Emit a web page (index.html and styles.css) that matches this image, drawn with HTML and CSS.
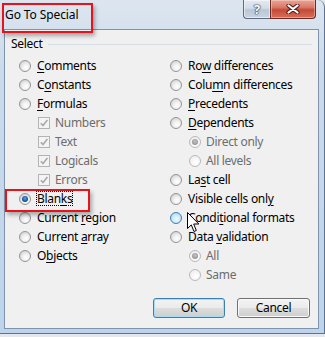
FILE: index.html
```html
<!DOCTYPE html>
<html lang="en">
<head>
  <meta charset="UTF-8">
  <meta name="viewport" content="width=device-width, initial-scale=1.0">
  <title>Go To Special</title>
  <link rel="stylesheet" href="styles.css">
</head>
<body>

  <div class="window">
    <!-- Title bar -->
    <div class="titlebar">
      <span class="title">Go To Special</span>
      <div class="caption-btn help">?</div>
      <div class="caption-btn close">
        <svg width="14" height="10" viewBox="0 0 14 10">
          <path d="M2.5 1.5 L11.5 8.5 M11.5 1.5 L2.5 8.5" stroke="#5a2018" stroke-width="4.2" stroke-linecap="round" fill="none"/>
          <path d="M2.5 1.5 L11.5 8.5 M11.5 1.5 L2.5 8.5" stroke="#ffffff" stroke-width="2.2" stroke-linecap="round" fill="none"/>
        </svg>
      </div>
    </div>

    <!-- Dialog body -->
    <div class="client">
      <div class="group-head">Select</div>

      <div class="options">
        <div class="col">
          <div class="opt"><span class="radio"></span><span><u>C</u>omments</span></div>
          <div class="opt"><span class="radio"></span><span>C<u>o</u>nstants</span></div>
          <div class="opt"><span class="radio"></span><span><u>F</u>ormulas</span></div>
          <div class="opt sub off"><span class="check"><svg width="10" height="10" viewBox="0 0 10 10"><path d="M1.8 5.2 L4 7.6 L8.4 2" stroke="#a9a9a9" stroke-width="1.6" fill="none"/></svg></span><span>Numbers</span></div>
          <div class="opt sub off"><span class="check"><svg width="10" height="10" viewBox="0 0 10 10"><path d="M1.8 5.2 L4 7.6 L8.4 2" stroke="#a9a9a9" stroke-width="1.6" fill="none"/></svg></span><span>Text</span></div>
          <div class="opt sub off"><span class="check"><svg width="10" height="10" viewBox="0 0 10 10"><path d="M1.8 5.2 L4 7.6 L8.4 2" stroke="#a9a9a9" stroke-width="1.6" fill="none"/></svg></span><span>Logicals</span></div>
          <div class="opt sub off"><span class="check"><svg width="10" height="10" viewBox="0 0 10 10"><path d="M1.8 5.2 L4 7.6 L8.4 2" stroke="#a9a9a9" stroke-width="1.6" fill="none"/></svg></span><span>Errors</span></div>
          <div class="opt"><span class="radio checked"></span><span class="focus">Blan<u>k</u>s</span></div>
          <div class="opt"><span class="radio"></span><span>Current <u>r</u>egion</span></div>
          <div class="opt"><span class="radio"></span><span>Current <u>a</u>rray</span></div>
          <div class="opt"><span class="radio"></span><span>O<u>b</u>jects</span></div>
        </div>
        <div class="col">
          <div class="opt"><span class="radio"></span><span>Ro<u>w</u> differences</span></div>
          <div class="opt"><span class="radio"></span><span>Colu<u>m</u>n differences</span></div>
          <div class="opt"><span class="radio"></span><span><u>P</u>recedents</span></div>
          <div class="opt"><span class="radio"></span><span><u>D</u>ependents</span></div>
          <div class="opt sub off"><span class="radio checked"></span><span>Direct only</span></div>
          <div class="opt sub off"><span class="radio"></span><span>All levels</span></div>
          <div class="opt"><span class="radio"></span><span>La<u>s</u>t cell</span></div>
          <div class="opt"><span class="radio"></span><span>Visible cells onl<u>y</u></span></div>
          <div class="opt"><span class="radio hover"></span><span>Condi<u>t</u>ional formats</span></div>
          <div class="opt"><span class="radio"></span><span>Data <u>v</u>alidation</span></div>
          <div class="opt sub off"><span class="radio checked"></span><span>All</span></div>
          <div class="opt sub off"><span class="radio"></span><span>Same</span></div>
        </div>
      </div>

      <div class="buttons">
        <div class="btn default">OK</div>
        <div class="btn cancel">Cancel</div>
      </div>
    </div>

    <!-- Annotations over the screenshot -->
    <div class="mark mark-title"></div>
    <div class="mark mark-blanks"></div>
    <svg class="cursor" width="13" height="21" viewBox="0 0 13 21">
      <path d="M0.5 0.5 L0.5 16.5 L4.3 12.9 L7 19.5 L9.3 18.5 L6.7 12 L11.8 12 Z" fill="#ffffff" stroke="#000000" stroke-width="1" stroke-linejoin="miter"/>
    </svg>
  </div>

</body>
</html>
```

FILE: styles.css
```css
* {
  margin: 0;
  padding: 0;
  box-sizing: border-box;
}
html, body {
  width: 325px;
  height: 337px;
  overflow: hidden;
}
body {
  background-color: #e4e8ec;
  font-family: "Noto Sans", "Open Sans", sans-serif;
  font-size: 12px;
  color: #000;
}
.window {
  position: relative;
  width: 325px;
  height: 334px;
  padding: 0 5px 4px 4px;
  background: linear-gradient(#dde6f0, #ccdbeb 20%, #bdd4ec);
  border-right: 1px solid #5d738f;
  border-bottom: 1px solid #5d738f;
  border-top-right-radius: 7px;
  display: flex;
  flex-direction: column;
}
.titlebar {
  height: 29px;
  flex: none;
  display: flex;
  align-items: flex-start;
}
.title {
  flex: 1;
  padding-left: 1px;
  margin-top: 7px;
  line-height: 16px;
  font-size: 12px;
  letter-spacing: -0.1px;
}
.caption-btn {
  height: 19px;
  display: flex;
  align-items: center;
  justify-content: center;
  border: 1px solid #5e6b7c;
  border-top: none;
}
.help {
  width: 27px;
  border-bottom-left-radius: 4px;
  border-right: none;
  background: linear-gradient(#e4eaf1, #d3dce7 45%, #b8c6d6 55%, #c9d5e2);
  box-shadow: inset 0 0 0 1px rgba(255, 255, 255, 0.5);
  color: #fff;
  font-weight: bold;
  font-size: 13px;
  line-height: 17px;
  text-shadow: 0 0 1px #2d3848, 0 0 1px #2d3848, 0 0 2px #2d3848;
}
.close {
  width: 46px;
  margin-right: 3px;
  border-color: #6a2a21;
  border-bottom-right-radius: 4px;
  background: linear-gradient(#e9a597, #d97a69 40%, #c54a36 55%, #d5705c);
  box-shadow: inset 0 0 0 1px rgba(255, 220, 210, 0.45);
}
.client {
  flex: 1;
  background-color: #f0f0f0;
  border: 1px solid #7f93ad;
  display: flex;
  flex-direction: column;
  padding-bottom: 10px;
  letter-spacing: -0.3px;
}
.group-head {
  display: flex;
  align-items: center;
  height: 22px;
  padding: 6px 6px 0 6px;
  margin-bottom: 4px;
  line-height: 16px;
}
.group-head::after {
  content: "";
  flex: 1;
  height: 1px;
  margin-left: 5px;
  background-color: #d5dde6;
}
.options {
  display: grid;
  grid-template-columns: 151px 1fr;
  padding-left: 14px;
}
.opt {
  display: flex;
  align-items: center;
  height: 19px;
  white-space: nowrap;
}
.opt u {
  text-decoration: underline;
  text-underline-offset: 2px;
}
.sub {
  padding-left: 19px;
}
.off {
  color: #6d6d6d;
}
.radio {
  flex: none;
  width: 12px;
  height: 12px;
  margin-right: 6px;
  border-radius: 50%;
  border: 1px solid #959595;
  background: radial-gradient(circle at 60% 65%, #ffffff 0, #f2f2f2 35%, #d6d6d6 75%, #cbcbcb 100%);
  display: flex;
  align-items: center;
  justify-content: center;
}
.sub .radio {
  margin-right: 5px;
}
.radio.checked::after {
  content: "";
  width: 6px;
  height: 6px;
  border-radius: 50%;
  background: radial-gradient(circle at 50% 40%, #5aa6ec 0, #1f62ad 50%, #0b2b57 100%);
}
.radio.hover {
  border-color: #3c7fb1;
  background: radial-gradient(circle at 55% 60%, #f0f9fe 0, #d2ecfa 40%, #a9d7f2 85%, #9ccff0 100%);
}
.off .radio {
  border-color: #b9b9b9;
  background: radial-gradient(circle at 60% 65%, #ffffff 0, #f5f5f5 50%, #e6e6e6 100%);
}
.off .radio.checked::after {
  background: radial-gradient(circle at 50% 40%, #c4c4c4 0, #9d9d9d 60%, #8a8a8a 100%);
}
.check {
  flex: none;
  width: 12px;
  height: 12px;
  margin-right: 5px;
  border: 1px solid #b3b3b3;
  background-color: #f4f4f4;
  display: flex;
  align-items: center;
  justify-content: center;
}
.focus {
  line-height: 13px;
  outline: 1px dotted #000;
  outline-offset: 0;
}
.buttons {
  margin-top: auto;
  display: flex;
  justify-content: flex-end;
  gap: 12px;
  padding-right: 8px;
}
.btn {
  width: 72px;
  height: 20px;
  border: 1px solid #707070;
  border-radius: 3px;
  background: linear-gradient(#f3f3f3 0, #ebebeb 50%, #dddddd 50%, #cfcfcf 100%);
  box-shadow: inset 0 0 0 1px #fafafa;
  text-align: center;
  line-height: 17px;
}
.btn.default {
  border-color: #3c7fb1;
  box-shadow: inset 0 0 0 1px #a8dcf4;
}
.btn.cancel {
  width: 73px;
}
.mark {
  position: absolute;
  border: 2px solid #e8121b;
  box-shadow: 2px 3px 4px rgba(0, 0, 0, 0.3);
}
.mark-title {
  left: 2px;
  top: 3px;
  width: 91px;
  height: 30px;
}
.mark-blanks {
  left: 5px;
  top: 189px;
  width: 85px;
  height: 23px;
}
.cursor {
  position: absolute;
  left: 187px;
  top: 212px;
}
```
